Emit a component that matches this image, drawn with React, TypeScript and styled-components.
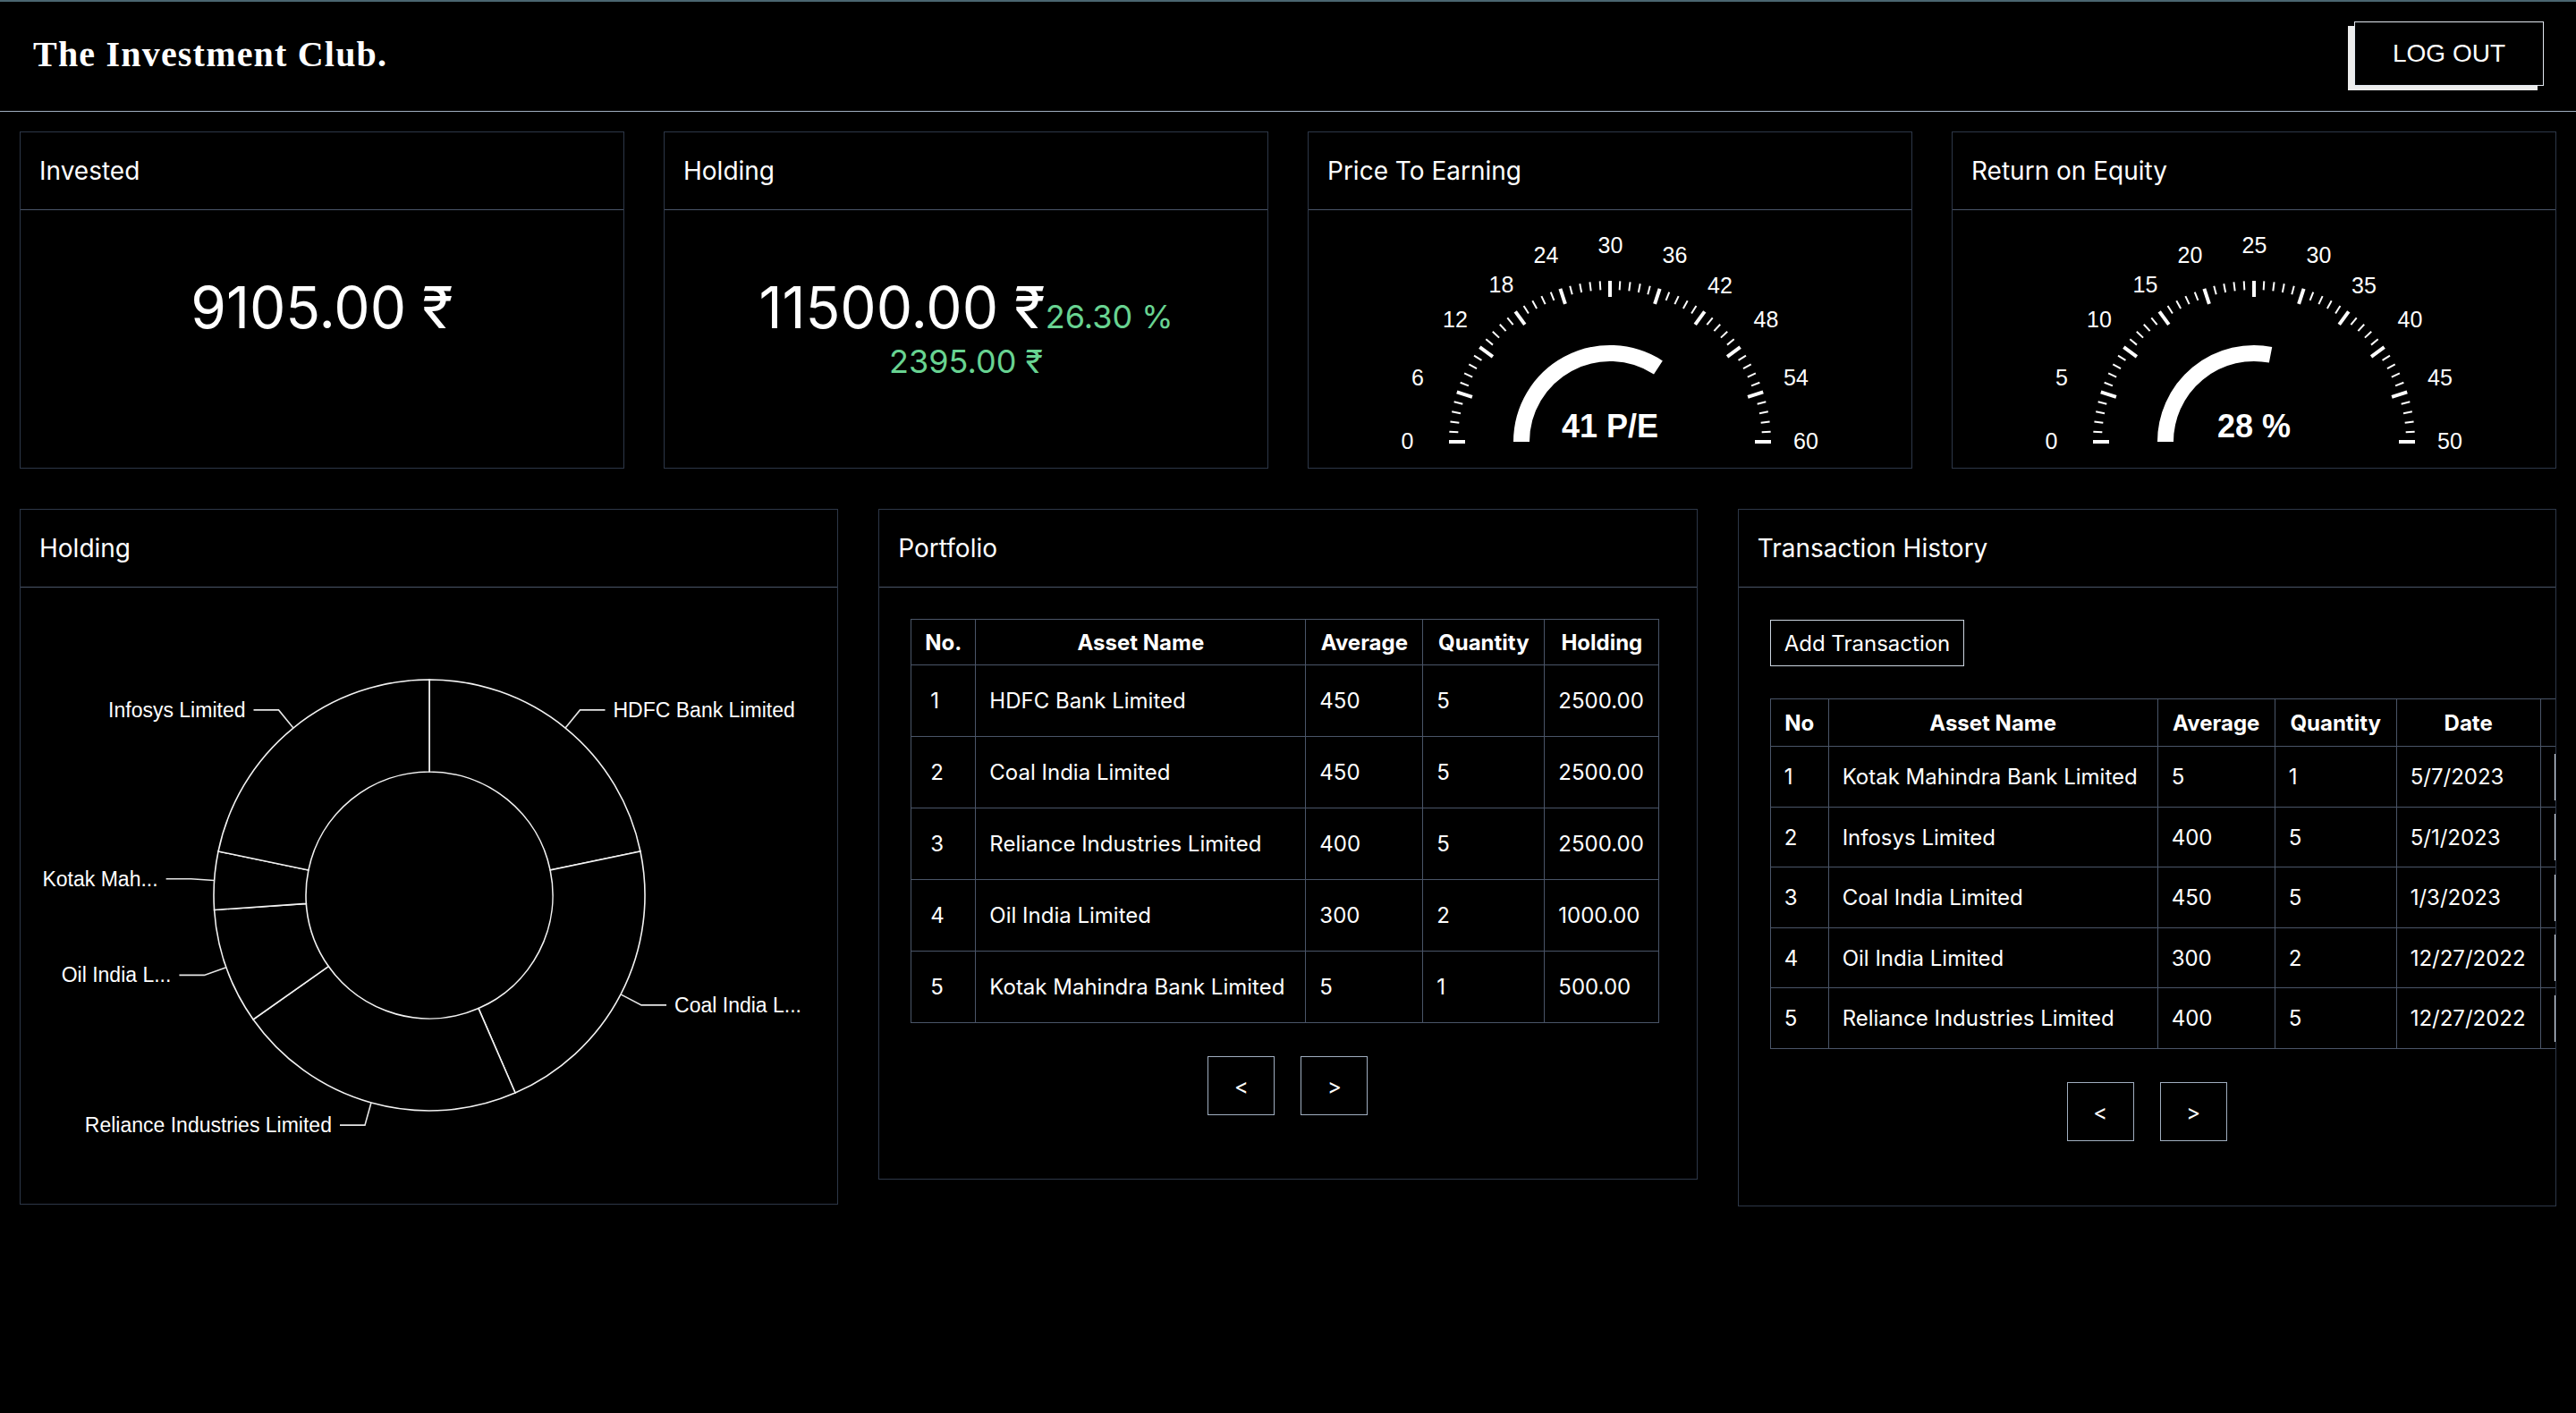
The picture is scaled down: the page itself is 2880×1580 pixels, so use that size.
import React from "react";
import styled, { createGlobalStyle } from "styled-components";
import { Trash2 } from "lucide-react";

const GlobalStyle = createGlobalStyle`
  * { box-sizing: border-box; }
  html, body { margin: 0; padding: 0; background: #000; }
  body {
    font-family: Inter, "Noto Sans", "DejaVu Sans", sans-serif;
    color: #fff;
    min-height: 100vh;
  }
`;

const Page = styled.div`
  min-height: 100vh;
  background: #000;
`;

const TopBar = styled.header`
  height: 125px;
  border-top: 2px solid #4a6670;
  border-bottom: 1px solid #a0aec0;
  display: flex;
  align-items: flex-start;
  justify-content: space-between;
  padding: 0 36px 0 37px;
`;

const Brand = styled.h1`
  margin: 0;
  margin-top: 35px;
  font-family: "Liberation Serif", "Times New Roman", serif;
  font-weight: 700;
  font-size: 40px;
  line-height: 48px;
  letter-spacing: 1.2px;
  color: #fff;
`;

const LogOut = styled.button`
  margin-top: 22px;
  width: 212px;
  height: 72px;
  background: #000;
  color: #fff;
  border: 1px solid #e2e8f0;
  box-shadow: -7px 5px 0 0 #ececec;
  font-family: "Liberation Sans", Arial, sans-serif;
  font-size: 28px;
  padding: 0;
  cursor: pointer;
`;

const Main = styled.main`
  padding: 22px 22px 40px;
`;

const TopRow = styled.div`
  display: grid;
  grid-template-columns: repeat(4, 1fr);
  column-gap: 44px;
`;

const BottomRow = styled.div`
  margin-top: 45px;
  display: grid;
  grid-template-columns: repeat(3, 1fr);
  column-gap: 45px;
  align-items: start;
`;

const Card = styled.section`
  border: 1px solid #2d3748;
  background: #000;
  overflow: hidden;
  display: flex;
  flex-direction: column;
  min-width: 0;
`;

const CardHeader = styled.header`
  height: 87px;
  flex: none;
  display: flex;
  align-items: center;
  padding: 0 21px;
  border-bottom: 1px solid #4a5568;
  font-size: 28px;
  font-weight: 400;
  color: #fff;
`;

const StatBody = styled.div`
  flex: 1;
  min-height: 288px;
  display: flex;
  flex-direction: column;
  align-items: center;
  padding-top: 71px;
`;

const BigValue = styled.div`
  font-size: 64px;
  line-height: 1.2;
  white-space: nowrap;
  color: #fff;
`;

const Change = styled.span`
  font-size: 36px;
  color: #68d391;
`;

const SubValue = styled.div`
  font-size: 36px;
  line-height: 1.2;
  color: #68d391;
`;

const GaugeBody = styled.div`
  height: 288px;
  display: flex;
  justify-content: center;
`;

const ChartBody = styled.div`
  height: 689px;
  display: flex;
  justify-content: center;
`;

const TableBody = styled.div`
  padding: 35px 0 35px 35px;
  display: flex;
  flex-direction: column;
  align-items: flex-start;
`;

const OutlineButton = styled.button`
  height: 52px;
  padding: 0 15px;
  background: #000;
  color: #fff;
  border: 1px solid #cbd5e0;
  font-family: inherit;
  font-size: 24px;
  margin-top: 1px;
  margin-bottom: 36px;
  cursor: pointer;
`;

const Table = styled.table<{ $width: number }>`
  border-collapse: collapse;
  table-layout: fixed;
  width: ${(p) => p.$width}px;
  flex: none;
  font-size: 24px;
`;

const Th = styled.th<{ $h: number }>`
  height: ${(p) => p.$h}px;
  border: 1px solid #4a5568;
  font-weight: 700;
  text-align: center;
  padding: 0 8px;
  white-space: nowrap;
`;

const Td = styled.td<{ $h: number; $pl?: number }>`
  height: ${(p) => p.$h}px;
  border: 1px solid #4a5568;
  padding: 0 0 0 ${(p) => p.$pl ?? 15}px;
  text-align: left;
  white-space: nowrap;
  overflow: hidden;
`;

const ActionTd = styled.td`
  border-top: 1px solid #4a5568;
  border-bottom: 1px solid #4a5568;
  padding: 0 0 0 15px;
  white-space: nowrap;
`;

const RowButton = styled.button`
  height: 52px;
  width: 60px;
  padding: 0;
  display: inline-flex;
  align-items: center;
  justify-content: center;
  background: #000;
  color: #fff;
  border: 2px solid #e2e8f0;
`;

const Pager = styled.div<{ $bottom?: number }>`
  align-self: stretch;
  margin: 37px 0 ${(p) => p.$bottom ?? 36}px -35px;
  display: flex;
  justify-content: center;
  gap: 29px;
`;

const PageButton = styled.button`
  width: 75px;
  height: 66px;
  background: #000;
  color: #fff;
  border: 1px solid #a0aec0;
  font-family: inherit;
  font-size: 24px;
  padding: 0;
  cursor: pointer;
`;

const GaugeText = styled.text`
  font-family: "Liberation Sans", Arial, sans-serif;
  font-size: 25px;
  fill: #fff;
`;

const GaugeValue = styled.text`
  font-family: "Liberation Sans", Arial, sans-serif;
  font-size: 36px;
  font-weight: 700;
  fill: #fff;
`;

const PieLabel = styled.text`
  font-family: "Liberation Sans", Arial, sans-serif;
  font-size: 23px;
  fill: #fff;
`;

const labelOffsets: [number, number][] = [
  [-226.5, -1],
  [-215, -72],
  [-173, -137],
  [-121.5, -176],
  [-71.5, -209],
  [0.5, -220],
  [72.5, -209],
  [123, -175],
  [174.5, -137],
  [208, -72],
  [219, -1],
];

type GaugeProps = { value: number; max: number; unit: string };

function Gauge({ value, max, unit }: GaugeProps) {
  const w = 674;
  const h = 288;
  const cx = 337;
  const cy = 259;
  const ticks: React.ReactNode[] = [];
  for (let i = 0; i <= 50; i++) {
    const major = i % 5 === 0;
    const a = Math.PI - (i / 50) * Math.PI;
    const r1 = 180;
    const r2 = major ? 162 : 170;
    ticks.push(
      <line
        key={i}
        x1={cx + r1 * Math.cos(a)}
        y1={cy - r1 * Math.sin(a)}
        x2={cx + r2 * Math.cos(a)}
        y2={cy - r2 * Math.sin(a)}
        stroke="#fff"
        strokeWidth={major ? 4 : 2}
      />
    );
  }
  const labels = labelOffsets.map(([dx, dy], k) => (
    <GaugeText
      key={k}
      x={cx + dx}
      y={cy + dy}
      textAnchor="middle"
      dominantBaseline="central"
    >
      {(max / 10) * k}
    </GaugeText>
  ));
  const rv = 99;
  const end = Math.PI - (value / max) * Math.PI;
  const d = `M ${cx - rv} ${cy} A ${rv} ${rv} 0 0 1 ${cx + rv * Math.cos(end)} ${
    cy - rv * Math.sin(end)
  }`;
  return (
    <svg width={w} height={h} viewBox={`0 0 ${w} ${h}`}>
      {ticks}
      {labels}
      <path d={d} fill="none" stroke="#fff" strokeWidth={18} />
      <GaugeValue x={cx} y={cy - 5} textAnchor="middle">
        {value} {unit}
      </GaugeValue>
    </svg>
  );
}

const pieData = [
  { label: "HDFC Bank Limited", value: 2500 },
  { label: "Coal India L...", value: 2500 },
  { label: "Reliance Industries Limited", value: 2500 },
  { label: "Oil India L...", value: 1000 },
  { label: "Kotak Mah...", value: 500 },
  { label: "Infosys Limited", value: 2500 },
];

function DonutChart() {
  const w = 913;
  const h = 689;
  const cx = 457;
  const cy = 344;
  const ro = 241;
  const ri = 138;
  const total = pieData.reduce((s, d) => s + d.value, 0);
  const pt = (r: number, deg: number) => {
    const t = (deg * Math.PI) / 180;
    return [cx + r * Math.sin(t), cy - r * Math.cos(t)];
  };
  let acc = 0;
  const slices = pieData.map((d, i) => {
    const start = (acc / total) * 360;
    acc += d.value;
    const end = (acc / total) * 360;
    const mid = (start + end) / 2;
    const large = end - start > 180 ? 1 : 0;
    const [x1, y1] = pt(ro, start);
    const [x2, y2] = pt(ro, end);
    const [x3, y3] = pt(ri, end);
    const [x4, y4] = pt(ri, start);
    const path = `M ${x1} ${y1} A ${ro} ${ro} 0 ${large} 1 ${x2} ${y2} L ${x3} ${y3} A ${ri} ${ri} 0 ${large} 0 ${x4} ${y4} Z`;
    const [p0x, p0y] = pt(ro, mid);
    const [p1x, p1y] = pt(ro + 26, mid);
    const right = p1x > cx;
    const p2x = p1x + (right ? 28 : -28);
    return (
      <g key={i}>
        <path d={path} fill="#000" stroke="#f2f2f2" strokeWidth={1.6} />
        <polyline
          points={`${p0x},${p0y} ${p1x},${p1y} ${p2x},${p1y}`}
          fill="none"
          stroke="#e6e6e6"
          strokeWidth={1.6}
        />
        <PieLabel
          x={p2x + (right ? 9 : -9)}
          y={p1y}
          textAnchor={right ? "start" : "end"}
          dominantBaseline="central"
        >
          {d.label}
        </PieLabel>
      </g>
    );
  });
  return (
    <svg width={w} height={h} viewBox={`0 0 ${w} ${h}`}>
      {slices}
    </svg>
  );
}

const portfolio = [
  ["1", "HDFC Bank Limited", "450", "5", "2500.00"],
  ["2", "Coal India Limited", "450", "5", "2500.00"],
  ["3", "Reliance Industries Limited", "400", "5", "2500.00"],
  ["4", "Oil India Limited", "300", "2", "1000.00"],
  ["5", "Kotak Mahindra Bank Limited", "5", "1", "500.00"],
];

const transactions = [
  ["1", "Kotak Mahindra Bank Limited", "5", "1", "5/7/2023"],
  ["2", "Infosys Limited", "400", "5", "5/1/2023"],
  ["3", "Coal India Limited", "450", "5", "1/3/2023"],
  ["4", "Oil India Limited", "300", "2", "12/27/2022"],
  ["5", "Reliance Industries Limited", "400", "5", "12/27/2022"],
];

const portfolioCols = [72, 369, 131, 136, 128];
const txCols = [65, 368, 131, 136, 161, 200];

export default function App() {
  return (
    <Page>
      <GlobalStyle />
      <TopBar>
        <Brand>The Investment Club.</Brand>
        <LogOut>LOG OUT</LogOut>
      </TopBar>
      <Main>
        <TopRow>
          <Card>
            <CardHeader>Invested</CardHeader>
            <StatBody>
              <BigValue>9105.00 ₹</BigValue>
            </StatBody>
          </Card>
          <Card>
            <CardHeader>Holding</CardHeader>
            <StatBody>
              <BigValue>
                11500.00 ₹<Change>26.30 %</Change>
              </BigValue>
              <SubValue>2395.00 ₹</SubValue>
            </StatBody>
          </Card>
          <Card>
            <CardHeader>Price To Earning</CardHeader>
            <GaugeBody>
              <Gauge value={41} max={60} unit="P/E" />
            </GaugeBody>
          </Card>
          <Card>
            <CardHeader>Return on Equity</CardHeader>
            <GaugeBody>
              <Gauge value={28} max={50} unit="%" />
            </GaugeBody>
          </Card>
        </TopRow>
        <BottomRow>
          <Card>
            <CardHeader>Holding</CardHeader>
            <ChartBody>
              <DonutChart />
            </ChartBody>
          </Card>
          <Card>
            <CardHeader>Portfolio</CardHeader>
            <TableBody>
              <Table $width={836}>
                <colgroup>
                  {portfolioCols.map((c, i) => (
                    <col key={i} style={{ width: c }} />
                  ))}
                </colgroup>
                <thead>
                  <tr>
                    {["No.", "Asset Name", "Average", "Quantity", "Holding"].map((h) => (
                      <Th key={h} $h={51}>
                        {h}
                      </Th>
                    ))}
                  </tr>
                </thead>
                <tbody>
                  {portfolio.map((row) => (
                    <tr key={row[0]}>
                      {row.map((cell, j) => (
                        <Td key={j} $h={80} $pl={j === 0 ? 21 : 15}>
                          {cell}
                        </Td>
                      ))}
                    </tr>
                  ))}
                </tbody>
              </Table>
              <Pager>
                <PageButton>&lt;</PageButton>
                <PageButton>&gt;</PageButton>
              </Pager>
            </TableBody>
          </Card>
          <Card>
            <CardHeader>Transaction History</CardHeader>
            <TableBody>
              <OutlineButton>Add Transaction</OutlineButton>
              <Table $width={1061}>
                <colgroup>
                  {txCols.map((c, i) => (
                    <col key={i} style={{ width: c }} />
                  ))}
                </colgroup>
                <thead>
                  <tr>
                    {["No", "Asset Name", "Average", "Quantity", "Date"].map((h) => (
                      <Th key={h} $h={53}>
                        {h}
                      </Th>
                    ))}
                    <Th $h={53} aria-label="Actions" />
                  </tr>
                </thead>
                <tbody>
                  {transactions.map((row, i) => (
                    <tr key={row[0]}>
                      {row.map((cell, j) => (
                        <Td key={j} $h={i % 2 === 0 ? 68 : 67} $pl={15}>
                          {cell}
                        </Td>
                      ))}
                      <ActionTd>
                        <RowButton aria-label="Delete">
                          <Trash2 size={24} color="#fff" />
                        </RowButton>
                      </ActionTd>
                    </tr>
                  ))}
                </tbody>
              </Table>
              <Pager $bottom={37}>
                <PageButton>&lt;</PageButton>
                <PageButton>&gt;</PageButton>
              </Pager>
            </TableBody>
          </Card>
        </BottomRow>
      </Main>
    </Page>
  );
}
